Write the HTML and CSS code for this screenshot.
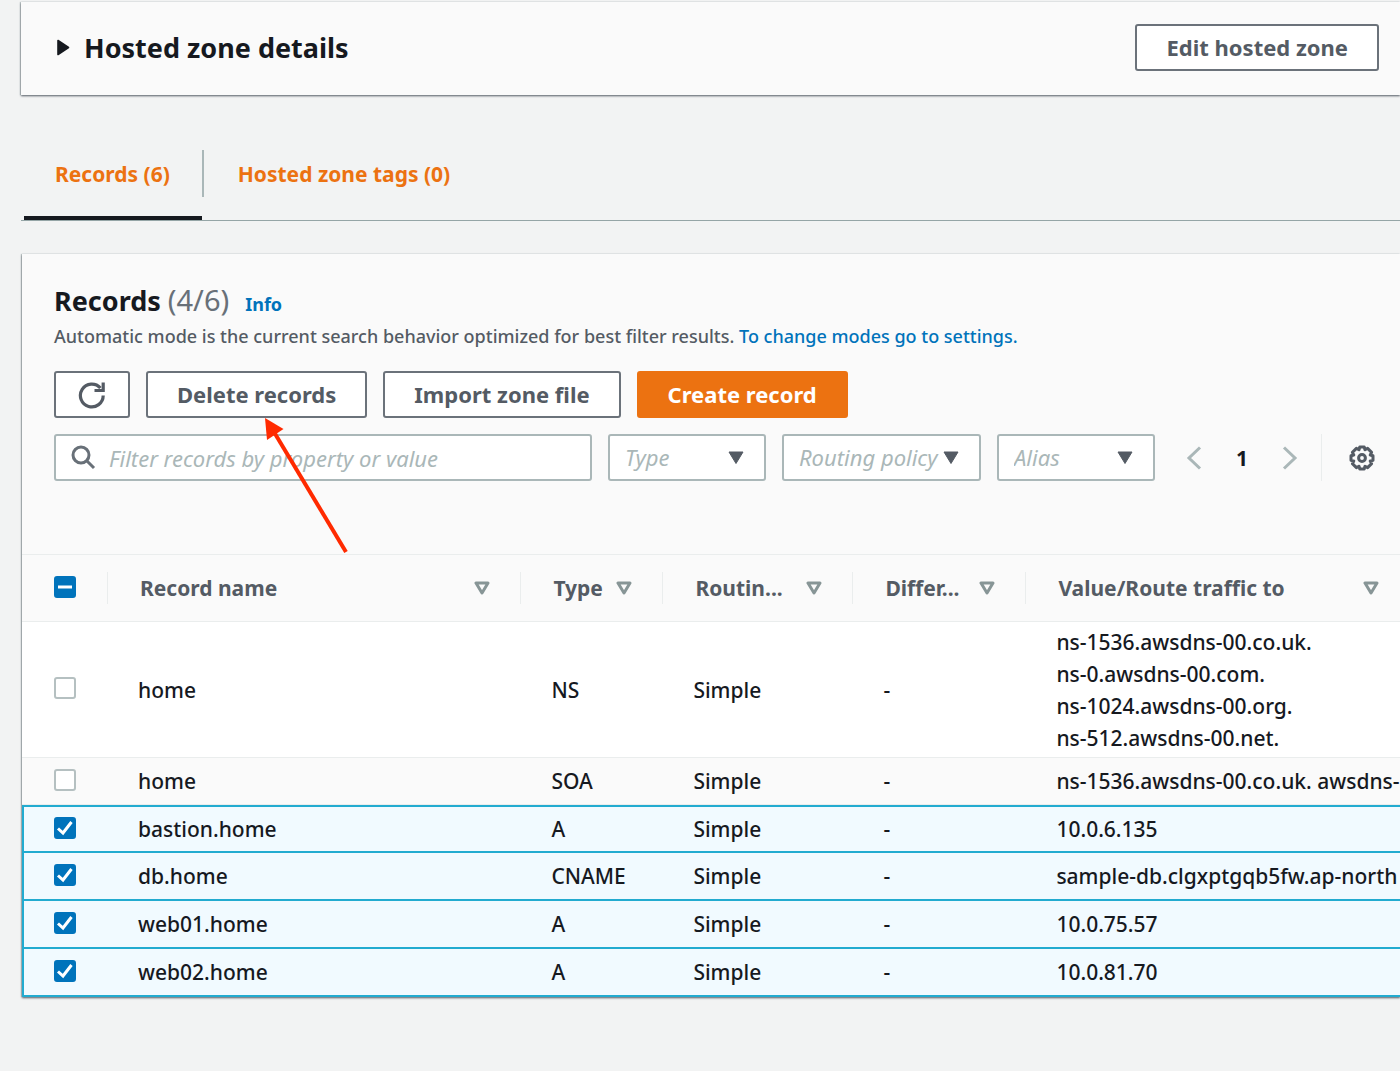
FILE: index.html
```html
<!DOCTYPE html>
<html lang="en">
<head>
  <meta charset="UTF-8" />
  <meta name="viewport" content="width=device-width, initial-scale=1.0"/>
  <title>Hosted zone records</title>
  <link rel="stylesheet" href="styles.css">
</head>
<body>
  <main>
    <section class="panel details">
      <button class="expander" aria-expanded="false">
        <svg width="14" height="17" viewBox="0 0 14 17"><path d="M2 1.5 L12.5 8.5 L2 15.5 Z" fill="#16191f" stroke="#16191f" stroke-width="1.6" stroke-linejoin="round"/></svg>
        Hosted zone details
      </button>
      <button class="btn">Edit hosted zone</button>
    </section>

    <nav class="tabs">
      <a class="tab active" href="#records">Records (6)</a>
      <a class="tab" href="#tags">Hosted zone tags (0)</a>
    </nav>

    <section class="panel records" id="records">
      <header class="records-header">
        <div class="title">
          <h2>Records <span class="count">(4/6)</span></h2>
          <a class="info" href="#info">Info</a>
        </div>
        <p class="description">Automatic mode is the current search behavior optimized for best filter results. <a href="#settings">To change modes go to settings.</a></p>

        <div class="actions">
          <button class="btn btn-icon" aria-label="Refresh">
            <svg width="28" height="28" viewBox="0 0 28 28" fill="none" stroke="#545b64" stroke-width="3.2"><path d="M25.2 14.5 A11.4 11.4 0 1 1 22.4 7"/><path d="M25.2 1.5 V9.5 H16.5"/></svg>
          </button>
          <div class="callout">
            <button class="btn">Delete records</button>
            <svg class="arrow" width="84" height="136" viewBox="0 0 84 136"><path d="M9 14 L81 134" stroke="#ff2a00" stroke-width="4"/><path d="M0 0 L18.5 11 L2 22 Z" fill="#ff2a00"/></svg>
          </div>
          <button class="btn">Import zone file</button>
          <button class="btn btn-primary">Create record</button>
        </div>

        <div class="filters">
          <label class="search">
            <svg width="25" height="25" viewBox="0 0 25 25" fill="none" stroke="#687078" stroke-width="3"><circle cx="10" cy="10" r="8"/><path d="M15.5 15.5 L23 23"/></svg>
            <input type="text" placeholder="Filter records by property or value" aria-label="Filter records">
          </label>
          <div class="select">
            <select aria-label="Type"><option>Type</option></select>
            <svg width="16" height="14" viewBox="0 0 16 14"><path d="M1 1 H15 L8 12.5 Z"/></svg>
          </div>
          <div class="select select-wide">
            <select aria-label="Routing policy"><option>Routing policy</option></select>
            <svg width="16" height="14" viewBox="0 0 16 14"><path d="M1 1 H15 L8 12.5 Z"/></svg>
          </div>
          <div class="select">
            <select aria-label="Alias"><option>Alias</option></select>
            <svg width="16" height="14" viewBox="0 0 16 14"><path d="M1 1 H15 L8 12.5 Z"/></svg>
          </div>
          <div class="pager">
            <button aria-label="Previous page"><svg width="16" height="24" viewBox="0 0 16 24"><path d="M14 1.5 L3 12 L14 22.5"/></svg></button>
            <span class="page">1</span>
            <button aria-label="Next page"><svg width="16" height="24" viewBox="0 0 16 24"><path d="M2 1.5 L13 12 L2 22.5"/></svg></button>
          </div>
          <button class="settings" aria-label="Preferences">
            <svg width="26" height="26" viewBox="0 0 26 26" fill="none" stroke="#545b64" stroke-width="3" stroke-linejoin="round"><circle cx="13" cy="13" r="3.4"/><path d="M10.8 2 H15.2 L16 4.8 L18.6 3.4 L22.6 7.4 L21.2 10 L24 10.8 V15.2 L21.2 16 L22.6 18.6 L18.6 22.6 L16 21.2 L15.2 24 H10.8 L10 21.2 L7.4 22.6 L3.4 18.6 L4.8 16 L2 15.2 V10.8 L4.8 10 L3.4 7.4 L7.4 3.4 L10 4.8 Z"/></svg>
          </button>
        </div>
      </header>

      <table>
        <colgroup>
          <col class="col-check"><col class="col-name"><col class="col-type"><col class="col-routing"><col class="col-differ"><col>
        </colgroup>
        <thead>
          <tr>
            <th><input type="checkbox" id="select-all" aria-label="Select all records"></th>
            <th><div class="th"><span>Record name</span><svg width="16" height="14" viewBox="0 0 16 14"><path d="M2 2 H14 L8 12 Z"/></svg></div></th>
            <th><div class="th"><span>Type</span><svg width="16" height="14" viewBox="0 0 16 14"><path d="M2 2 H14 L8 12 Z"/></svg></div></th>
            <th><div class="th"><span>Routin...</span><svg width="16" height="14" viewBox="0 0 16 14"><path d="M2 2 H14 L8 12 Z"/></svg></div></th>
            <th><div class="th"><span>Differ...</span><svg width="16" height="14" viewBox="0 0 16 14"><path d="M2 2 H14 L8 12 Z"/></svg></div></th>
            <th><div class="th"><span>Value/Route traffic to</span><svg width="16" height="14" viewBox="0 0 16 14"><path d="M2 2 H14 L8 12 Z"/></svg></div></th>
          </tr>
        </thead>
        <tbody>
          <tr class="multi">
            <td><input type="checkbox" aria-label="Select home NS"></td>
            <td>home</td><td>NS</td><td>Simple</td><td>-</td>
            <td>ns-1536.awsdns-00.co.uk.<br>ns-0.awsdns-00.com.<br>ns-1024.awsdns-00.org.<br>ns-512.awsdns-00.net.</td>
          </tr>
          <tr>
            <td><input type="checkbox" aria-label="Select home SOA"></td>
            <td>home</td><td>SOA</td><td>Simple</td><td>-</td>
            <td>ns-1536.awsdns-00.co.uk. awsdns-</td>
          </tr>
          <tr class="selected">
            <td><input type="checkbox" checked aria-label="Select bastion.home"></td>
            <td>bastion.home</td><td>A</td><td>Simple</td><td>-</td><td>10.0.6.135</td>
          </tr>
          <tr class="selected">
            <td><input type="checkbox" checked aria-label="Select db.home"></td>
            <td>db.home</td><td>CNAME</td><td>Simple</td><td>-</td><td>sample-db.clgxptgqb5fw.ap-north</td>
          </tr>
          <tr class="selected">
            <td><input type="checkbox" checked aria-label="Select web01.home"></td>
            <td>web01.home</td><td>A</td><td>Simple</td><td>-</td><td>10.0.75.57</td>
          </tr>
          <tr class="selected">
            <td><input type="checkbox" checked aria-label="Select web02.home"></td>
            <td>web02.home</td><td>A</td><td>Simple</td><td>-</td><td>10.0.81.70</td>
          </tr>
        </tbody>
      </table>
    </section>
  </main>

  <script>
    // some rows are selected, so the header box is in the mixed state
    document.getElementById("select-all").indeterminate = true;
  </script>
</body>
</html>
```
FILE: styles.css
```css
* {
  box-sizing: border-box;
}

body {
  margin: 0;
  font-family: "Noto Sans", "Open Sans", sans-serif;
  font-size: 21px;
  font-weight: 500;
  line-height: 32px;
  color: #16191f;
  background: #f2f3f3;
  overflow-x: hidden;
}

main {
  padding: 2px 0 74px 21px;
}

button,
input,
select {
  font: inherit;
  color: inherit;
}

button {
  padding: 0;
  border: none;
  background: none;
  cursor: pointer;
}

a {
  color: #0073bb;
  text-decoration: none;
}

svg {
  display: block;
  flex: none;
}

.panel {
  background: #fafafa;
  box-shadow: 0 1px 2px #545b64, -1px 0 1px #c4cccc;
}

.details {
  display: flex;
  align-items: center;
  justify-content: space-between;
  padding: 22px 21px 24px 35px;
}

.expander {
  display: flex;
  align-items: center;
  gap: 14px;
  font-size: 27px;
  font-weight: 700;
}

.btn {
  height: 47px;
  padding: 0 29px 2px;
  border: 2px solid #6b727a;
  border-radius: 3px;
  background: #fff;
  color: #545b64;
  font-size: 22px;
  font-weight: 700;
  white-space: nowrap;
}

.btn-icon {
  padding: 0 22px;
}

.btn-primary {
  background: #ec7211;
  border-color: #ec7211;
  color: #fff;
}

.tabs {
  display: flex;
  margin-top: 55px;
  padding-left: 3px;
  border-bottom: 1px solid #95a5a6;
}

.tab {
  display: flex;
  padding-bottom: 18px;
  border-bottom: 4px solid transparent;
  color: #ec7211;
  font-weight: 700;
  line-height: 48px;
}

.tab::before {
  content: "";
  width: 31px;
  height: 47px;
}

.tab.active {
  padding-right: 32px;
  border-bottom-color: #16191f;
}

.tab + .tab::before {
  margin-right: 3px;
  border-left: 2px solid #aab7b8;
}

.records {
  margin-top: 33px;
  margin-left: 1px;
}

.records-header {
  padding: 30px 25px 73px 32px;
}

.title {
  display: flex;
  align-items: baseline;
  gap: 16px;
}

.title h2 {
  margin: 0;
  font-size: 27px;
  line-height: 32px;
}

.count {
  color: #687078;
  font-size: 29px;
  font-weight: 400;
}

.info {
  font-size: 18px;
  font-weight: 700;
}

.description {
  margin: 0 0 19px;
  color: #545b64;
  font-size: 18px;
  line-height: 32px;
}

.actions {
  display: flex;
  gap: 16px;
  margin-bottom: 16px;
}

.callout {
  position: relative;
}

.arrow {
  position: absolute;
  top: 47px;
  left: 119px;
  z-index: 1;
  pointer-events: none;
}

.filters {
  display: flex;
  align-items: center;
  gap: 16px;
}

.search,
.select {
  height: 47px;
  border: 2px solid #aab7b8;
  border-radius: 3px;
  background: #fff;
  font-size: 22px;
  font-weight: 400;
}

.search {
  display: flex;
  flex: 1;
  align-items: center;
  gap: 13px;
  padding: 0 15px;
}

.search input {
  flex: 1;
  min-width: 0;
  padding: 0;
  border: none;
  outline: none;
  background: none;
}

.search input::placeholder {
  color: #aab7b8;
  font-style: italic;
  opacity: 1;
}

.select {
  position: relative;
  width: 158px;
}

.select-wide {
  width: 199px;
}

.select select {
  width: 100%;
  height: 100%;
  padding: 0 15px 2px;
  border: none;
  background: none;
  color: #aab7b8;
  font-style: italic;
  appearance: none;
}

/* caret lies over the select box */
.select svg {
  position: absolute;
  top: 15px;
  right: 20px;
  fill: #545b64;
  stroke: #545b64;
  stroke-linejoin: round;
  pointer-events: none;
}

.pager {
  display: flex;
  align-items: center;
  gap: 34px;
  margin-left: 15px;
}

.pager svg {
  fill: none;
  stroke: #aab7b8;
  stroke-width: 3;
}

.page {
  font-weight: 700;
}

.settings {
  height: 47px;
  margin-left: 7px;
  padding-left: 27px;
  border-left: 1px solid #eaeded;
}

table {
  width: 100%;
  table-layout: fixed;
  border-collapse: separate;
  border-spacing: 0;
}

.col-check { width: 85px; }
.col-name { width: 30%; }
.col-type { width: 142px; }
.col-routing { width: 190px; }
.col-differ { width: 173px; }

th {
  height: 68px;
  padding: 0;
  border-top: 1px solid #eaeded;
  border-bottom: 1px solid #eaeded;
  color: #545b64;
  text-align: left;
}

.th {
  display: flex;
  align-items: center;
  justify-content: space-between;
  padding: 0 30px 0 32px;
  border-left: 1px solid #eaeded;
  white-space: nowrap;
}

th:last-child .th {
  padding-right: 21px;
}

.th svg {
  fill: none;
  stroke: #879596;
  stroke-width: 3;
  stroke-linejoin: round;
}

td {
  height: 47px;
  padding: 3px 0 3px 31px;
  border-bottom: 1px solid #eaeded;
  background: #fafafa;
  white-space: nowrap;
  overflow: hidden;
}

.multi td {
  padding-top: 4px;
  background: #fff;
}

th:first-child,
td:first-child {
  padding: 0 0 3px 32px;
}

.selected td {
  height: 48px;
  border-bottom: 2px solid #22abd0;
  background: #f1faff;
}

.selected td:first-child {
  padding-left: 30px;
  border-left: 2px solid #22abd0;
}

tr:not(.selected) + .selected td {
  border-top: 2px solid #22abd0;
}

input[type="checkbox"] {
  display: block;
  width: 22px;
  height: 22px;
  margin: 0;
  border: 2px solid #b5c0c1;
  border-radius: 3px;
  background: #fff center / 22px 22px no-repeat;
  appearance: none;
}

input[type="checkbox"]:checked,
input[type="checkbox"]:indeterminate {
  border-color: #0073bb;
  background-color: #0073bb;
}

input[type="checkbox"]:checked {
  background-image: url("data:image/svg+xml,%3Csvg xmlns='http://www.w3.org/2000/svg' viewBox='0 0 22 22'%3E%3Cpath d='M4 11.5 L9 16 L17.5 5' fill='none' stroke='white' stroke-width='3'/%3E%3C/svg%3E");
}

input[type="checkbox"]:indeterminate {
  background-image: url("data:image/svg+xml,%3Csvg xmlns='http://www.w3.org/2000/svg' viewBox='0 0 22 22'%3E%3Cpath d='M4 11 H18' stroke='white' stroke-width='3'/%3E%3C/svg%3E");
}
```
